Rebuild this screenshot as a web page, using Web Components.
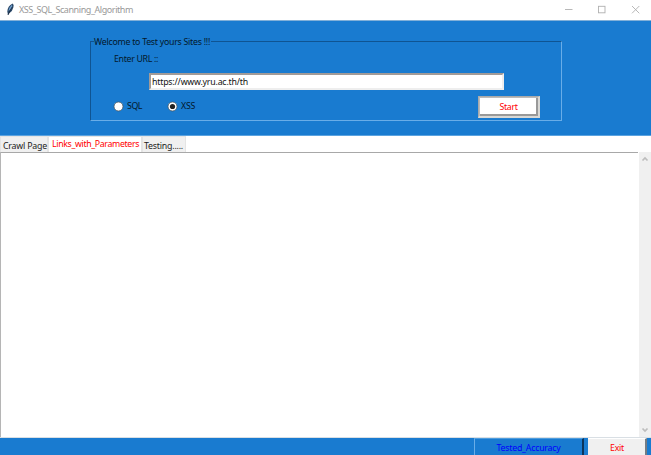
<!DOCTYPE html>
<html lang="en"><head><meta charset="utf-8"><title>XSS_SQL_Scanning_Algorithm</title>
<style>html,body{margin:0;height:455px;overflow:hidden;background:#fff}</style></head>
<body><scan-app></scan-app>
<script>
const define = (name, html, ready) => customElements.define(name, class extends HTMLElement {
  constructor() { super(); this.attachShadow({ mode: 'open' }).innerHTML = html; }
  connectedCallback() { if (ready) ready.call(this); }
});

// A label whose tracking is adjusted to fill the width given in "w".
define('ui-label', `<style>:host{display:inline-block;white-space:pre;line-height:12px;height:12px}span{display:inline-block}</style><span><slot></slot></span>`, function () {
  const w = +this.getAttribute('w'), s = this.shadowRoot.querySelector('span');
  this.style.width = w + 'px';
  s.style.letterSpacing = (w - s.getBoundingClientRect().width) / this.textContent.length + 'px';
});

define('title-bar', `<style>
:host{display:flex;background:#fff;border-bottom:1px solid #82b0d8;box-sizing:border-box;height:21px;color:#999;font-size:9px;padding-left:5px}
.t{margin:4px auto 0 3px}.feather{margin-top:3px}.w{margin-top:4px}
</style>
<svg class="feather" width="11" height="13" viewBox="0 0 11 13"><path d="M3 12 2.3 8.500Q2.500 3 7.600.4 9.300 1.500 8.400 4.200 7.600 8.200 4.300 10.300Z" fill="#2c4a6b"/><path d="M3.600 8.300Q3.900 4.200 7 1.500 7.800 3.300 5.700 6.500Z" fill="#6f9fd0"/><path d="M3 12 4.600 8.200 7.200 4" fill="none" stroke="#14263a" stroke-width=".8"/></svg>
<span class="t"><slot></slot></span>
<svg class="w" width="86" height="12" viewBox="0 0 86 12" fill="none" stroke="#b0b0b0" stroke-width=".9"><path d="M-.5 5.500h8M67 2l7.300 7.300M74.300 2 67 9.300"/><rect x="33.500" y="2.300" width="6.500" height="6.500"/></svg>`);

define('group-box', `<style>
:host{display:block;box-sizing:border-box;width:472px;height:80px;border:1px solid #0f5492;border-right-color:#69ade8;border-bottom-color:#69ade8;padding-left:3px}
.l{display:block;width:117px;height:12px;margin-top:-6px;background:#197bd0}
</style><span class="l"><slot name="legend"></slot></span><slot></slot>`);

define('url-entry', `<style>
:host{display:block;box-sizing:border-box;width:355px;height:17px;background:#fff;border:2px solid #a29b98;border-right-color:#eee;border-bottom-color:#eee;padding:1px 0 0 1px;line-height:0}
</style><slot></slot>`);

define('radio-option', `<style>:host{display:flex;height:12px;align-items:center;gap:3px}svg{display:block}circle.d{display:none}:host([checked]) circle.d{display:block}</style>
<svg width="11" height="11" viewBox="0 0 11 11"><circle cx="5.500" cy="5.500" r="4.500" fill="#fff" stroke="#48555f" stroke-width=".8"/><circle class="d" cx="5.500" cy="5.500" r="2.600" fill="#222"/></svg><slot></slot>`);

define('push-button', `<style>
:host{display:flex;box-sizing:border-box;align-items:center;justify-content:center;width:62px;height:22px;background:#fff;color:#f00;border:1px solid #aaa;border-right:2px solid #d8d8d5;border-bottom:2px solid #d8d8d5;box-shadow:inset 1px 1px #bbb,inset -2px -2px #999}
:host([kind=accuracy]){width:110px;height:18px;background:#197bd0;color:#00f;border:0;border-left:1px solid #69ade8;border-top:1px solid #4e9cdd;border-right:2px solid #0b345b;box-shadow:none}
:host([kind=exit]){width:59px;height:18px;background:#f0f0f0;border:0;border-right:2px solid #747c84;border-top:1px solid #fff;box-shadow:none;padding-left:1px}
</style><slot></slot>`);

define('page-tab', `<style>
:host{display:block;box-sizing:border-box;height:16px;background:#f0f0f0;border:1px solid #e4e4e4;border-bottom:0;padding:3px 0 0 2px;line-height:0}
:host([active]){height:17px;background:#fff;color:#f00;padding:1px 0 0 2px}
</style><slot></slot>`);

define('text-pane', `<style>
:host{display:flex;box-sizing:border-box;height:285px;background:#fff;border-left:1px solid #b5b5b5}
.page{flex:1;border-top:1px solid #a8a8a8}
.gap{width:1px}
.bar{width:12px;background:#f0f0f0;display:flex;flex-direction:column;justify-content:space-between;align-items:center}
svg{display:block;margin:4px 1px 4px 0}
</style><div class="page"><slot></slot></div><div class="gap"></div><div class="bar">
<svg width="8" height="6" viewBox="0 0 8 6"><path d="M1.500 4.500 4 2 6.500 4.500" fill="none" stroke="#bdbdbd" stroke-width="1.700"/></svg>
<svg width="8" height="6" viewBox="0 0 8 6"><path d="M1.500 1.500 4 4 6.500 1.500" fill="none" stroke="#bdbdbd" stroke-width="1.700"/></svg></div>`);

define('scan-app', `<style>
:host{display:block;width:651px;height:455px;overflow:hidden;background:#fff;color:#03182b;font:8.800px/12px "Noto Sans","Open Sans",sans-serif}
.top{box-sizing:border-box;height:115px;background:#197bd0;padding:20px 0 0 90px;border-bottom:1px solid #5ba3e0}
.enter{padding:5px 0 0 20px;height:21px;box-sizing:border-box;display:flex}
url-entry{margin:4px 0 0 55px}
.choices{display:flex;align-items:flex-start;padding-left:19px}
.choices radio-option{margin-top:10px}.choices radio-option+radio-option{margin-left:25px}
.choices push-button{margin:6px 0 0 283px}
.tabs{height:16px;display:flex;align-items:flex-end}
.tabs [active]{align-self:flex-start}
.foot{display:flex;box-sizing:border-box;height:18px;background:#197bd0;padding-left:474px;gap:4px}
.line{height:1px;background:#d9dfe4}
.tabs page-tab:not([active]){color:#222}
</style>
<title-bar><ui-label w="114">XSS_SQL_Scanning_Algorithm</ui-label></title-bar>
<div class="top"><group-box><ui-label slot="legend" w="116">Welcome to Test yours Sites !!!</ui-label>
<div class="enter"><ui-label w="44">Enter URL ::</ui-label></div>
<url-entry><ui-label w="96" style="color:#111">https://www.yru.ac.th/th</ui-label></url-entry>
<div class="choices"><radio-option><ui-label w="15">SQL</ui-label></radio-option><radio-option checked><ui-label w="14">XSS</ui-label></radio-option><push-button><ui-label w="18">Start</ui-label></push-button></div>
</group-box></div>
<div class="tabs"><page-tab style="width:48px"><ui-label w="44">Crawl Page</ui-label></page-tab><page-tab active style="width:94px;padding-left:3px"><ui-label w="87">Links_with_Parameters</ui-label></page-tab><page-tab style="width:44px;padding-left:1px"><ui-label w="39">Testing.....</ui-label></page-tab></div>
<text-pane></text-pane>
<div class="line"></div>
<div class="foot"><push-button kind="accuracy"><ui-label w="64">Tested_Accuracy</ui-label></push-button><push-button kind="exit"><ui-label w="14">Exit</ui-label></push-button></div>`);
</script></body></html>
